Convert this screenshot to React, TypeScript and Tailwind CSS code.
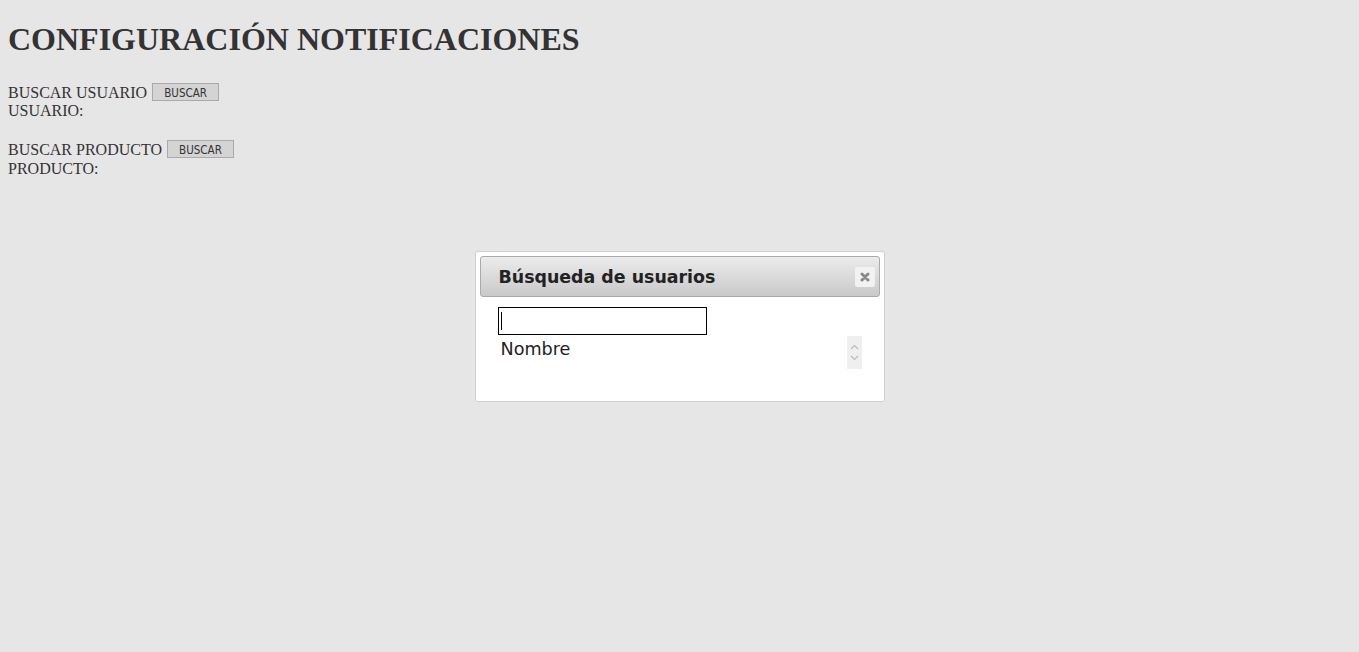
import React from 'react';

const btn =
  "ml-[5px] h-[18px] w-[67px] border border-[#aaa] bg-[#d4d4d4] text-[11.5px] text-[#333] font-['DejaVu_Sans_Condensed','DejaVu_Sans',sans-serif] leading-none flex items-center justify-center pt-[3px]";

const App: React.FC = () => {
  return (
    <div className="relative min-h-[652px] w-full bg-[#e6e6e6] text-[#333] px-2 font-['Liberation_Serif',serif]">
      {/* Page header */}
      <h1 className="pt-[21px] pb-[21px] text-[32px] leading-[37px] font-bold">CONFIGURACIÓN NOTIFICACIONES</h1>

      {/* Search rows */}
      <div className="text-[16px] leading-[19px] pt-[2px]">
        <div className="flex items-center h-[20px] pt-[2px]">
          <span>BUSCAR USUARIO</span>
          <button className={btn}>BUSCAR</button>
        </div>
        <div>USUARIO:</div>

        <div className="mt-[19px] flex items-center h-[20px]">
          <span>BUSCAR PRODUCTO</span>
          <button className={btn}>BUSCAR</button>
        </div>
        <div>PRODUCTO:</div>
      </div>

      {/* Dialog */}
      <div className="absolute inset-0 pt-[1px] flex items-center justify-center pointer-events-none">
        <div className="pointer-events-auto w-[410px] h-[151px] bg-white border border-[#d0d0d0] rounded-[3px] p-[4px] font-['DejaVu_Sans',sans-serif]">
          <div className="flex items-center justify-between h-[41px] pl-[18px] pr-[4px] rounded-[3px] border border-[#aaa] bg-gradient-to-b from-[#ececec] to-[#c9c9c9]">
            <span className="text-[17.4px] font-bold text-[#222] pt-[1px]">Búsqueda de usuarios</span>
            <div className="w-[20px] h-[20px] rounded-[2px] bg-[#f2f2f2] flex items-center justify-center">
              <svg width="10" height="10" viewBox="0 0 10 10">
                <path d="M2 2 L8 8 M8 2 L2 8" stroke="#8a8a8a" strokeWidth="3" strokeLinecap="round" />
              </svg>
            </div>
          </div>

          <div className="pl-[18px] pr-[18px] pt-[10px]">
            <div className="relative w-[209px] h-[28px] border border-black">
              <input className="w-full h-full outline-none px-1 bg-transparent" />
              <span className="absolute left-[2px] top-[4px] w-[1px] h-[18px] bg-black" />
            </div>
            <div className="flex justify-between items-start">
              <span className="pl-[3px] pt-[3px] text-[17.6px] leading-[22px] text-[#222]">Nombre</span>
              <div className="w-[15px] h-[33px] mt-[1px] bg-[#efefef] flex flex-col items-center justify-center gap-[5px]">
                <svg width="9" height="6" viewBox="0 0 9 6">
                  <path d="M1 5 L4.5 1.5 L8 5" stroke="#bbb" strokeWidth="1.2" fill="none" />
                </svg>
                <svg width="9" height="6" viewBox="0 0 9 6">
                  <path d="M1 1 L4.5 4.5 L8 1" stroke="#bbb" strokeWidth="1.2" fill="none" />
                </svg>
              </div>
            </div>
          </div>
        </div>
      </div>
    </div>
  );
};

export default App;
